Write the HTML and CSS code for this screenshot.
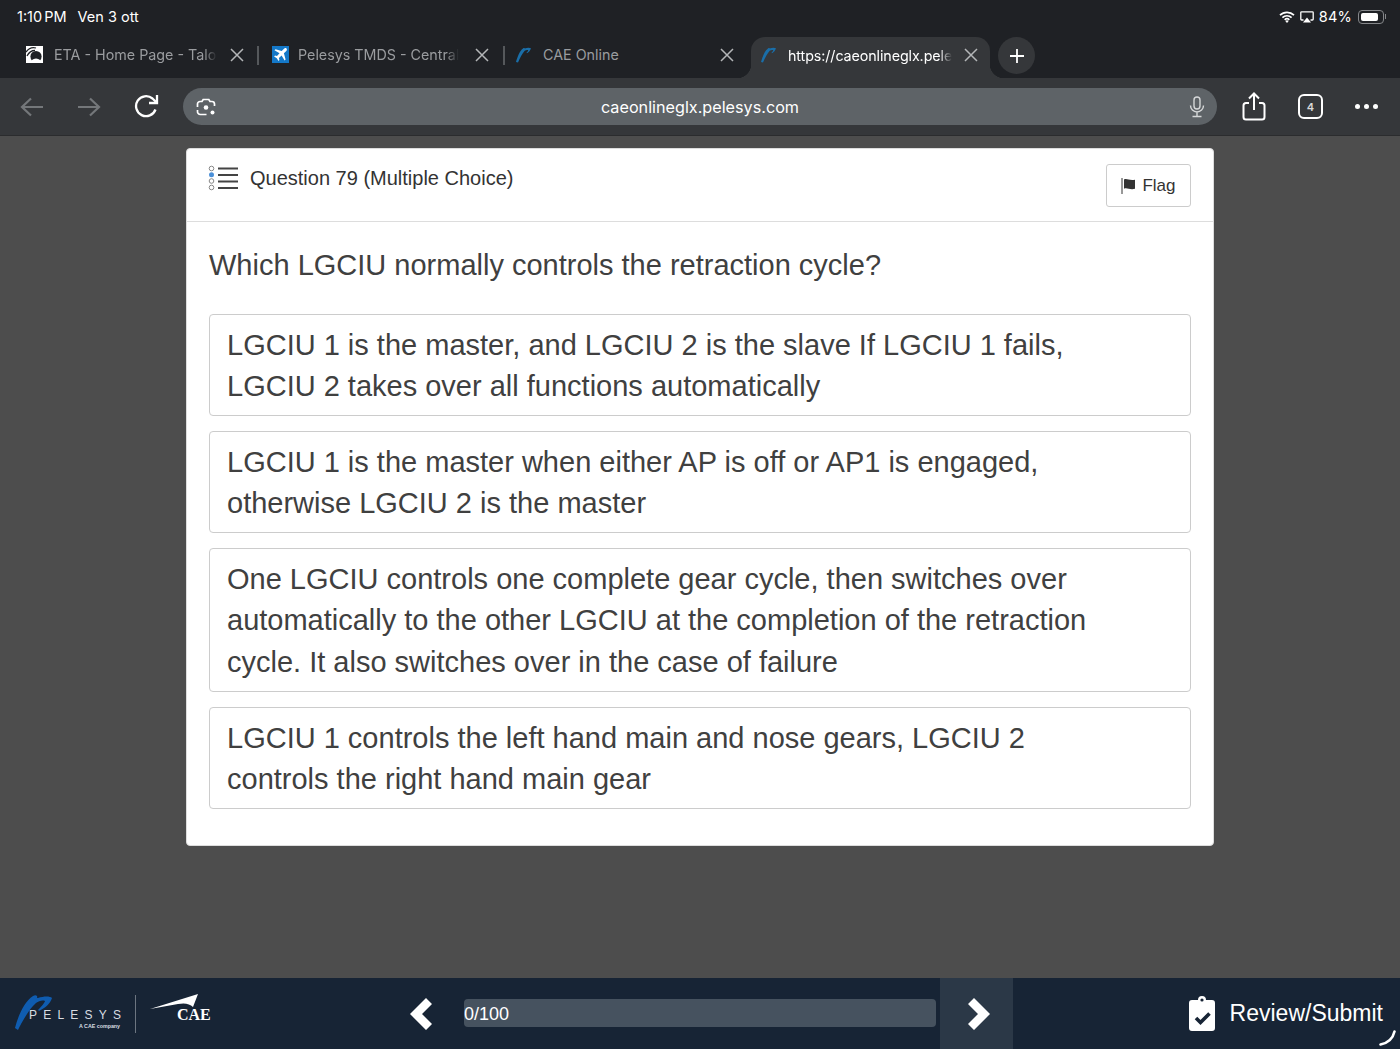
FILE: index.html
```html
<!DOCTYPE html>
<html lang="en">
<head>
    <meta charset="UTF-8">
    <meta name="viewport" content="width=device-width, initial-scale=1.0">
    <title>CAE Online</title>
    <link rel="stylesheet" href="styles.css">
</head>
<body>
    <div class="statusbar">
        <div class="status-left"><span class="clock">1:10 PM</span><span>Ven 3 ott</span></div>
        <div class="status-right">
            <svg width="16" height="12" viewBox="0 0 16 12"><path d="M1 4.2a10 10 0 0 1 14 0M3.4 6.6a6.6 6.6 0 0 1 9.2 0M5.7 8.8a3.3 3.3 0 0 1 4.6 0" fill="none" stroke="#fff" stroke-width="1.7"/><path d="M8 12l-1.7-1.9a2.4 2.4 0 0 1 3.4 0z" fill="#fff"/></svg>
            <svg width="14" height="12" viewBox="0 0 14 12"><path d="M3.5 9H1.6a.8.8 0 0 1-.8-.8V1.6A.8.8 0 0 1 1.6.8h10.8a.8.8 0 0 1 .8.8v6.6a.8.8 0 0 1-.8.8h-1.9" fill="none" stroke="#fff" stroke-width="1.3"/><path d="M7 6.5L11 11.5H3z" fill="#fff"/></svg>
            <span class="battery-text">84%</span>
            <div class="battery"><div class="battery-fill"></div></div>
            <div class="battery-tip"></div>
        </div>
    </div>

    <div class="tabstrip">
        <div class="tab tab-first">
            <svg class="favicon" width="17" height="17" viewBox="0 0 17 17"><rect width="17" height="17" fill="#fff"/><circle cx="10" cy="10.5" r="5.6" fill="#1f2125"/><path d="M0 6C3 2 7 1 10 2M1 10C3 6 6 4.500 9 4.500" stroke="#1f2125" stroke-width="1.300" fill="none"/><path d="M6 14a5 4 0 0 1 8 0v3H6z" fill="#fff"/></svg>
            <span class="tab-title">ETA - Home Page - Talo</span>
            <svg class="tab-close" width="14" height="14" viewBox="0 0 14 14"><path d="M1 1l12 12M13 1L1 13"/></svg>
        </div>
        <div class="tab-sep tab-sep-first"></div>
        <div class="tab tab-second">
            <svg class="favicon" width="17" height="17" viewBox="0 0 17 17"><rect width="17" height="17" fill="#1478c8"/><path d="M14.500 2.500c-.8-.8-1.800-.5-2.500.2L9.700 5 3.500 3.300 2.500 4.300 7.500 7.300 5 10l-2-.4-.9.9 2.700 1.700 1.700 2.700.9-.9L6.900 12l2.700-2.500 3 5 1-1L11.900 7.300l2.400-2.300c.6-.7.900-1.800.200-2.500z" fill="#fff"/></svg>
            <span class="tab-title">Pelesys TMDS - Central</span>
            <svg class="tab-close" width="14" height="14" viewBox="0 0 14 14"><path d="M1 1l12 12M13 1L1 13"/></svg>
        </div>
        <div class="tab-sep"></div>
        <div class="tab tab-third">
            <svg class="favicon" width="15" height="16" viewBox="0 0 15 16"><path d="M0 15C1.500 10 3.500 4 7 1.500c.8-.6 1.500-.5 1.800 0C11 .5 13.500.5 15 1.200 14.300 3.500 13 5 11 6.300l-.5-.5c1-1 1.500-1.800 1.700-2.800-1.200-.3-2.400 0-3.500.8C6.500 6 4 11 2 15.500z" fill="#1a6ea8"/></svg>
            <span class="tab-title">CAE Online</span>
            <svg class="tab-close" width="14" height="14" viewBox="0 0 14 14"><path d="M1 1l12 12M13 1L1 13"/></svg>
        </div>
        <div class="tab tab-active">
            <svg class="favicon" width="15" height="16" viewBox="0 0 15 16"><path d="M0 15C1.500 10 3.500 4 7 1.500c.8-.6 1.500-.5 1.800 0C11 .5 13.500.5 15 1.200 14.300 3.500 13 5 11 6.300l-.5-.5c1-1 1.500-1.800 1.700-2.800-1.200-.3-2.400 0-3.500.8C6.500 6 4 11 2 15.500z" fill="#1a6ea8"/></svg>
            <span class="tab-title">https://caeonlineglx.pele</span>
            <svg class="tab-close" width="14" height="14" viewBox="0 0 14 14"><path d="M1 1l12 12M13 1L1 13"/></svg>
        </div>
        <div class="tab-new">
            <svg width="16" height="16" viewBox="0 0 16 16"><path d="M8 1v14M1 8h14" stroke="#fff" stroke-width="1.800" fill="none"/></svg>
        </div>
    </div>

    <div class="toolbar">
        <svg class="tool-back" width="24" height="20" viewBox="0 0 24 20"><path d="M23 10H2M11 1.500L2 10l9 8.500" fill="none" stroke="#74777a" stroke-width="2.200"/></svg>
        <svg class="tool-forward" width="24" height="20" viewBox="0 0 24 20"><path d="M1 10h21M13 1.500l9 8.500-9 8.500" fill="none" stroke="#74777a" stroke-width="2.200"/></svg>
        <svg class="tool-reload" width="25" height="25" viewBox="0 0 25 25"><path d="M21.500 15.500A10 10 0 1 1 18.500 4.500L22 7.800" fill="none" stroke="#fff" stroke-width="2.300"/><path d="M23 1v8h-8" fill="none" stroke="#fff" stroke-width="2.300"/></svg>
        <div class="urlbar">
            <svg class="url-lens" width="20" height="20" viewBox="0 0 20 20"><path d="M1.500 10V7a2.500 2.500 0 0 1 2.500-2.500h2L7.200 2.500h5.600L14 4.500h2A2.500 2.500 0 0 1 18.500 7v2M1.500 13v1A3 3 0 0 0 4.500 17.500h6" fill="none" stroke="#fff" stroke-width="1.700"/><circle cx="10" cy="10.500" r="2.300" fill="#fff"/><circle cx="16.500" cy="15.500" r="2" fill="#fff"/></svg>
            <span class="url-text">caeonlineglx.pelesys.com</span>
            <svg class="url-mic" width="16" height="22" viewBox="0 0 16 22"><rect x="5" y="1" width="6" height="12" rx="3" fill="none" stroke="#d5d7d8" stroke-width="1.400"/><path d="M1.500 9.500a6.500 6.500 0 0 0 13 0M8 16v4M3.500 20.500h9" fill="none" stroke="#d5d7d8" stroke-width="1.400"/></svg>
        </div>
        <div class="tool-actions">
            <svg width="24" height="29" viewBox="0 0 24 29"><path d="M7 11H4a2.500 2.500 0 0 0-2.500 2.500v11.500A2.500 2.500 0 0 0 4 27.500h16a2.500 2.500 0 0 0 2.500-2.500V13.500A2.500 2.500 0 0 0 20 11h-3M12 18V2M7 6.500L12 1.500l5 5" fill="none" stroke="#fff" stroke-width="2"/></svg>
            <div class="tab-count">4</div>
            <div class="more-dots"><i></i><i></i><i></i></div>
        </div>
    </div>

    <div class="content">
        <div class="card">
            <div class="card-head">
                <div class="card-title">
                    <svg class="list-icon" width="30" height="26" viewBox="0 0 30 26"><g fill="none" stroke="#888" stroke-width="1"><circle cx="3.500" cy="3.500" r="2.300"/><circle cx="3.500" cy="16" r="2.300"/><circle cx="3.500" cy="22.500" r="2.300"/></g><circle cx="3.500" cy="9.700" r="2.500" fill="#4a8fd8"/><path d="M10 3.500h20M10 10h20M10 16.500h20M10 23h20" stroke="#444" stroke-width="2.200"/></svg>
                    <span>Question 79 (Multiple Choice)</span>
                </div>
                <button class="flag-btn" type="button">
                    <svg width="16" height="16" viewBox="0 0 16 16"><path d="M1 0v16" stroke="#333" stroke-width="1"/><path d="M3 1.500c3-1.500 5 1.500 11 .3v9c-5 1.500-8-1.500-11 0z" fill="#333"/></svg>
                    Flag
                </button>
            </div>
            <div class="card-body">
                <h3 class="question">Which LGCIU normally controls the retraction cycle?</h3>
                <div class="answer">LGCIU 1 is the master, and LGCIU 2 is the slave If LGCIU 1 fails,<br>LGCIU 2 takes over all functions automatically</div>
                <div class="answer">LGCIU 1 is the master when either AP is off or AP1 is engaged,<br>otherwise LGCIU 2 is the master</div>
                <div class="answer">One LGCIU controls one complete gear cycle, then switches over<br>automatically to the other LGCIU at the completion of the retraction<br>cycle. It also switches over in the case of failure</div>
                <div class="answer">LGCIU 1 controls the left hand main and nose gears, LGCIU 2<br>controls the right hand main gear</div>
            </div>
        </div>
    </div>

    <div class="footer">
        <div class="logos">
            <div class="pelesys">
                <svg class="pelesys-mark" width="40" height="38" viewBox="0 0 40 38"><path d="M1 34C4 22 10 8 19 2c3-2 5 0 4 2h1c6-2 12-2 14 0-2 6-7 10-13 13l-1-1c4-4 7-8 7-9-3-1-6 0-9 2C15 15 8 28 4 36z" fill="#0f5cb0"/></svg>
                <div class="pelesys-word">PELESYS</div>
                <div class="pelesys-sub">A CAE company</div>
            </div>
            <div class="logo-divider"></div>
            <div class="cae">
                <svg class="cae-plane" width="48" height="18" viewBox="0 0 48 18"><path d="M0 15L48 0l-5 13q-5-5-15-3z" fill="#fff"/></svg>
                <div class="cae-word">CAE</div>
            </div>
        </div>
        <div class="progress-group">
            <svg class="chev" width="22" height="32" viewBox="0 0 22 32"><path d="M16 0l6 6-10 10 10 10-6 6L0 16z" fill="#fff"/></svg>
            <div class="progress">0/100</div>
            <div class="next-btn">
                <svg class="chev" width="22" height="32" viewBox="0 0 22 32"><path d="M6 0l16 16-16 16-6-6 10-10L0 6z" fill="#fff"/></svg>
            </div>
        </div>
        <div class="review">
            <svg width="26" height="35" viewBox="0 0 26 35"><path d="M3 4h6a4 4 0 0 1 8 0h6a3 3 0 0 1 3 3v25a3 3 0 0 1-3 3H3a3 3 0 0 1-3-3V7a3 3 0 0 1 3-3z" fill="#fff"/><circle cx="13" cy="4" r="1.600" fill="#172435"/><path d="M7 22l4.500 4.500L20.500 17.500" fill="none" stroke="#172435" stroke-width="3.600"/></svg>
            <span>Review/Submit</span>
        </div>
        <svg class="corner-arc" width="17" height="16" viewBox="0 0 17 16"><path d="M15.500 1.500C14 8 9 13 1.500 14.500" fill="none" stroke="#fff" stroke-width="2.600" stroke-linecap="round"/></svg>
    </div>
</body>
</html>
```

FILE: styles.css
```css
* {
    box-sizing: border-box;
}
html, body {
    height: 100%;
}
body {
    margin: 0;
    display: flex;
    flex-direction: column;
    height: 100vh;
    overflow: hidden;
    background-color: #4d4d4d;
    font-family: "Liberation Sans", Arial, sans-serif;
}
.statusbar {
    height: 33px;
    flex: none;
    display: flex;
    justify-content: space-between;
    align-items: center;
    padding: 0 14px 0 17px;
    background-color: #1f2125;
    color: #fff;
    font-family: Inter, sans-serif;
    font-size: 14.5px;
}
.status-left {
    display: flex;
    gap: 11px;
}
.clock {
    word-spacing: -2px;
}
.status-right {
    display: flex;
    align-items: center;
    gap: 5px;
}
.battery-text {
    letter-spacing: 0.2px;
}
.battery {
    width: 26px;
    height: 14px;
    border: 1px solid #85878a;
    border-radius: 4px;
    padding: 2px;
    margin-left: 1px;
}
.battery-fill {
    width: 84%;
    height: 100%;
    background-color: #fff;
    border-radius: 2px;
}
.battery-tip {
    width: 1px;
    height: 5px;
    margin-left: -4px;
    background-color: #85878a;
}
.tabstrip {
    height: 45px;
    flex: none;
    display: flex;
    align-items: stretch;
    background-color: #1f2125;
    font-family: Inter, sans-serif;
    font-size: 14.3px;
    color: #9a9c9f;
}
.tab {
    display: flex;
    align-items: center;
    height: 37px;
    margin-top: 3px;
}
.tab-title {
    overflow: hidden;
    white-space: nowrap;
    -webkit-mask-image: linear-gradient(to right, #000 92%, transparent);
    mask-image: linear-gradient(to right, #000 92%, transparent);
}
.tab-close {
    flex: none;
    fill: none;
    stroke: #b4b6b8;
    stroke-width: 1.500;
}
.favicon {
    flex: none;
}
.tab-first {
    width: 255px;
    padding-left: 26px;
}
.tab-first .tab-title {
    width: 163px;
    margin-left: 11px;
    margin-right: 13px;
}
.tab-second {
    width: 244px;
    padding-left: 14px;
    margin-left: -1px;
}
.tab-second .tab-title {
    width: 161px;
    margin-left: 9px;
    margin-right: 16px;
}
.tab-sep {
    width: 2px;
    height: 19px;
    margin-top: 13px;
    margin-left: 1px;
    background-color: #55585b;
}
.tab-sep-first {
    margin-left: 2px;
}
.tab-third {
    width: 246px;
    padding-left: 11px;
}
.tab-third .tab-title {
    width: 177px;
    margin-left: 12px;
    -webkit-mask-image: none;
    mask-image: none;
}
.tab-active {
    position: relative;
    width: 239px;
    height: 41px;
    margin-top: 4px;
    padding: 0 12px 5px 10px;
    border-radius: 14px 14px 0 0;
    background-color: #35373a;
    color: #fff;
}
.tab-active::before,
.tab-active::after {
    content: '';
    position: absolute;
    bottom: 0;
    width: 14px;
    height: 14px;
    background: radial-gradient(circle at 0 0, #1f2125 14px, #35373a 14.5px);
}
.tab-active::before {
    left: -14px;
}
.tab-active::after {
    right: -14px;
    background: radial-gradient(circle at 100% 0, #1f2125 14px, #35373a 14.5px);
}
.tab-active .tab-title {
    width: 164px;
    margin-left: 12px;
    margin-right: 12px;
    letter-spacing: -0.1px;
}
.tab-new {
    width: 37px;
    height: 37px;
    margin: 4px 0 0 8px;
    border-radius: 50%;
    display: flex;
    align-items: center;
    justify-content: center;
    background-color: #35373a;
    z-index: 1;
}
.toolbar {
    height: 58px;
    flex: none;
    display: flex;
    align-items: center;
    padding-left: 20px;
    background-color: #35373a;
    border-bottom: 1px solid #2b2c2e;
}
.tool-forward {
    margin-left: 33px;
}
.tool-reload {
    margin-left: 33px;
}
.urlbar {
    width: 1034px;
    height: 37px;
    margin-left: 24px;
    padding: 0 12px 0 13px;
    border-radius: 19px;
    display: flex;
    align-items: center;
    justify-content: space-between;
    background-color: #5e6367;
}
.url-lens {
    margin-right: -5px;
}
.url-text {
    color: #fff;
    font-family: Inter, sans-serif;
    font-size: 16.2px;
}
.tool-actions {
    display: flex;
    align-items: center;
    margin-left: 25px;
}
.tab-count {
    width: 25px;
    height: 25px;
    margin-left: 32px;
    border: 2px solid #fff;
    border-radius: 6px;
    display: flex;
    align-items: center;
    justify-content: center;
    color: #d8d8d8;
    font-family: Inter, sans-serif;
    font-size: 11px;
    font-weight: 600;
}
.more-dots {
    display: flex;
    gap: 4px;
    margin-left: 32px;
}
.more-dots i {
    width: 5px;
    height: 5px;
    border-radius: 50%;
    background-color: #fff;
}
.content {
    flex: 1;
    padding-top: 12px;
    display: flex;
    justify-content: center;
    align-items: flex-start;
}
.card {
    width: 1028px;
    height: 698px;
    background-color: #fff;
    border: 1px solid #ddd;
    border-radius: 4px;
}
.card-head {
    height: 73px;
    display: flex;
    justify-content: space-between;
    align-items: flex-start;
    padding: 15px 22px 0;
    border-bottom: 1px solid #ddd;
}
.card-title {
    display: flex;
    align-items: center;
    gap: 12px;
    height: 30px;
    color: #333;
    font-size: 20px;
    margin-top: -1px;
}
.list-icon {
    margin-left: -1px;
}
.flag-btn {
    width: 85px;
    height: 43px;
    display: flex;
    align-items: center;
    justify-content: center;
    gap: 5px;
    border: 1px solid #ccc;
    border-radius: 3px;
    background-color: #fff;
    color: #333;
    font-family: "Liberation Sans", Arial, sans-serif;
    font-size: 17px;
}
.card-body {
    padding: 22px 22px 0;
}
.question {
    margin: 0 0 27px;
    color: #404040;
    font-size: 29px;
    font-weight: normal;
    line-height: 43px;
}
.answer {
    margin-bottom: 15px;
    padding: 10px 17px 8px;
    border: 1px solid #ccc;
    border-radius: 4px;
    color: #404040;
    font-size: 29px;
    line-height: 41.1px;
    white-space: nowrap;
}
.footer {
    position: relative;
    height: 71px;
    flex: none;
    display: flex;
    align-items: center;
    background-color: #172435;
}
.logos {
    width: 410px;
    flex: none;
    display: flex;
    align-items: center;
    padding-left: 14px;
}
.pelesys {
    position: relative;
    width: 121px;
    height: 40px;
}
.pelesys-mark {
    position: absolute;
    left: 0;
    top: 0;
}
.pelesys-word {
    position: absolute;
    left: 15px;
    top: 14px;
    color: #d8dde2;
    font-size: 12px;
    letter-spacing: 6.200px;
    white-space: nowrap;
}
.pelesys-sub {
    position: absolute;
    left: 65px;
    top: 29px;
    color: #d8dde2;
    font-size: 5.300px;
    font-weight: bold;
    white-space: nowrap;
}
.logo-divider {
    width: 1px;
    height: 38px;
    background-color: #6c7580;
}
.cae {
    position: relative;
    width: 74px;
    height: 40px;
}
.cae-plane {
    position: absolute;
    left: 14px;
    top: 0;
}
.cae-word {
    position: absolute;
    left: 41px;
    top: 12px;
    color: #fff;
    font-family: "Liberation Serif", serif;
    font-size: 16px;
    font-weight: bold;
}
.progress-group {
    display: flex;
    align-items: center;
    height: 71px;
}
.progress {
    width: 472px;
    height: 28px;
    margin: 0 4px 2px 32px;
    padding-top: 5px;
    border-radius: 4px;
    background-color: #46525f;
    color: #fff;
    font-size: 18px;
    line-height: 20px;
}
.next-btn {
    width: 73px;
    height: 71px;
    padding-left: 4px;
    display: flex;
    align-items: center;
    justify-content: center;
    background-color: #2b3847;
}
.review {
    margin-left: auto;
    padding-right: 17px;
    display: flex;
    align-items: center;
    gap: 15px;
    color: #fff;
    font-size: 23px;
}
.corner-arc {
    position: absolute;
    right: 4px;
    bottom: 3px;
}
```
